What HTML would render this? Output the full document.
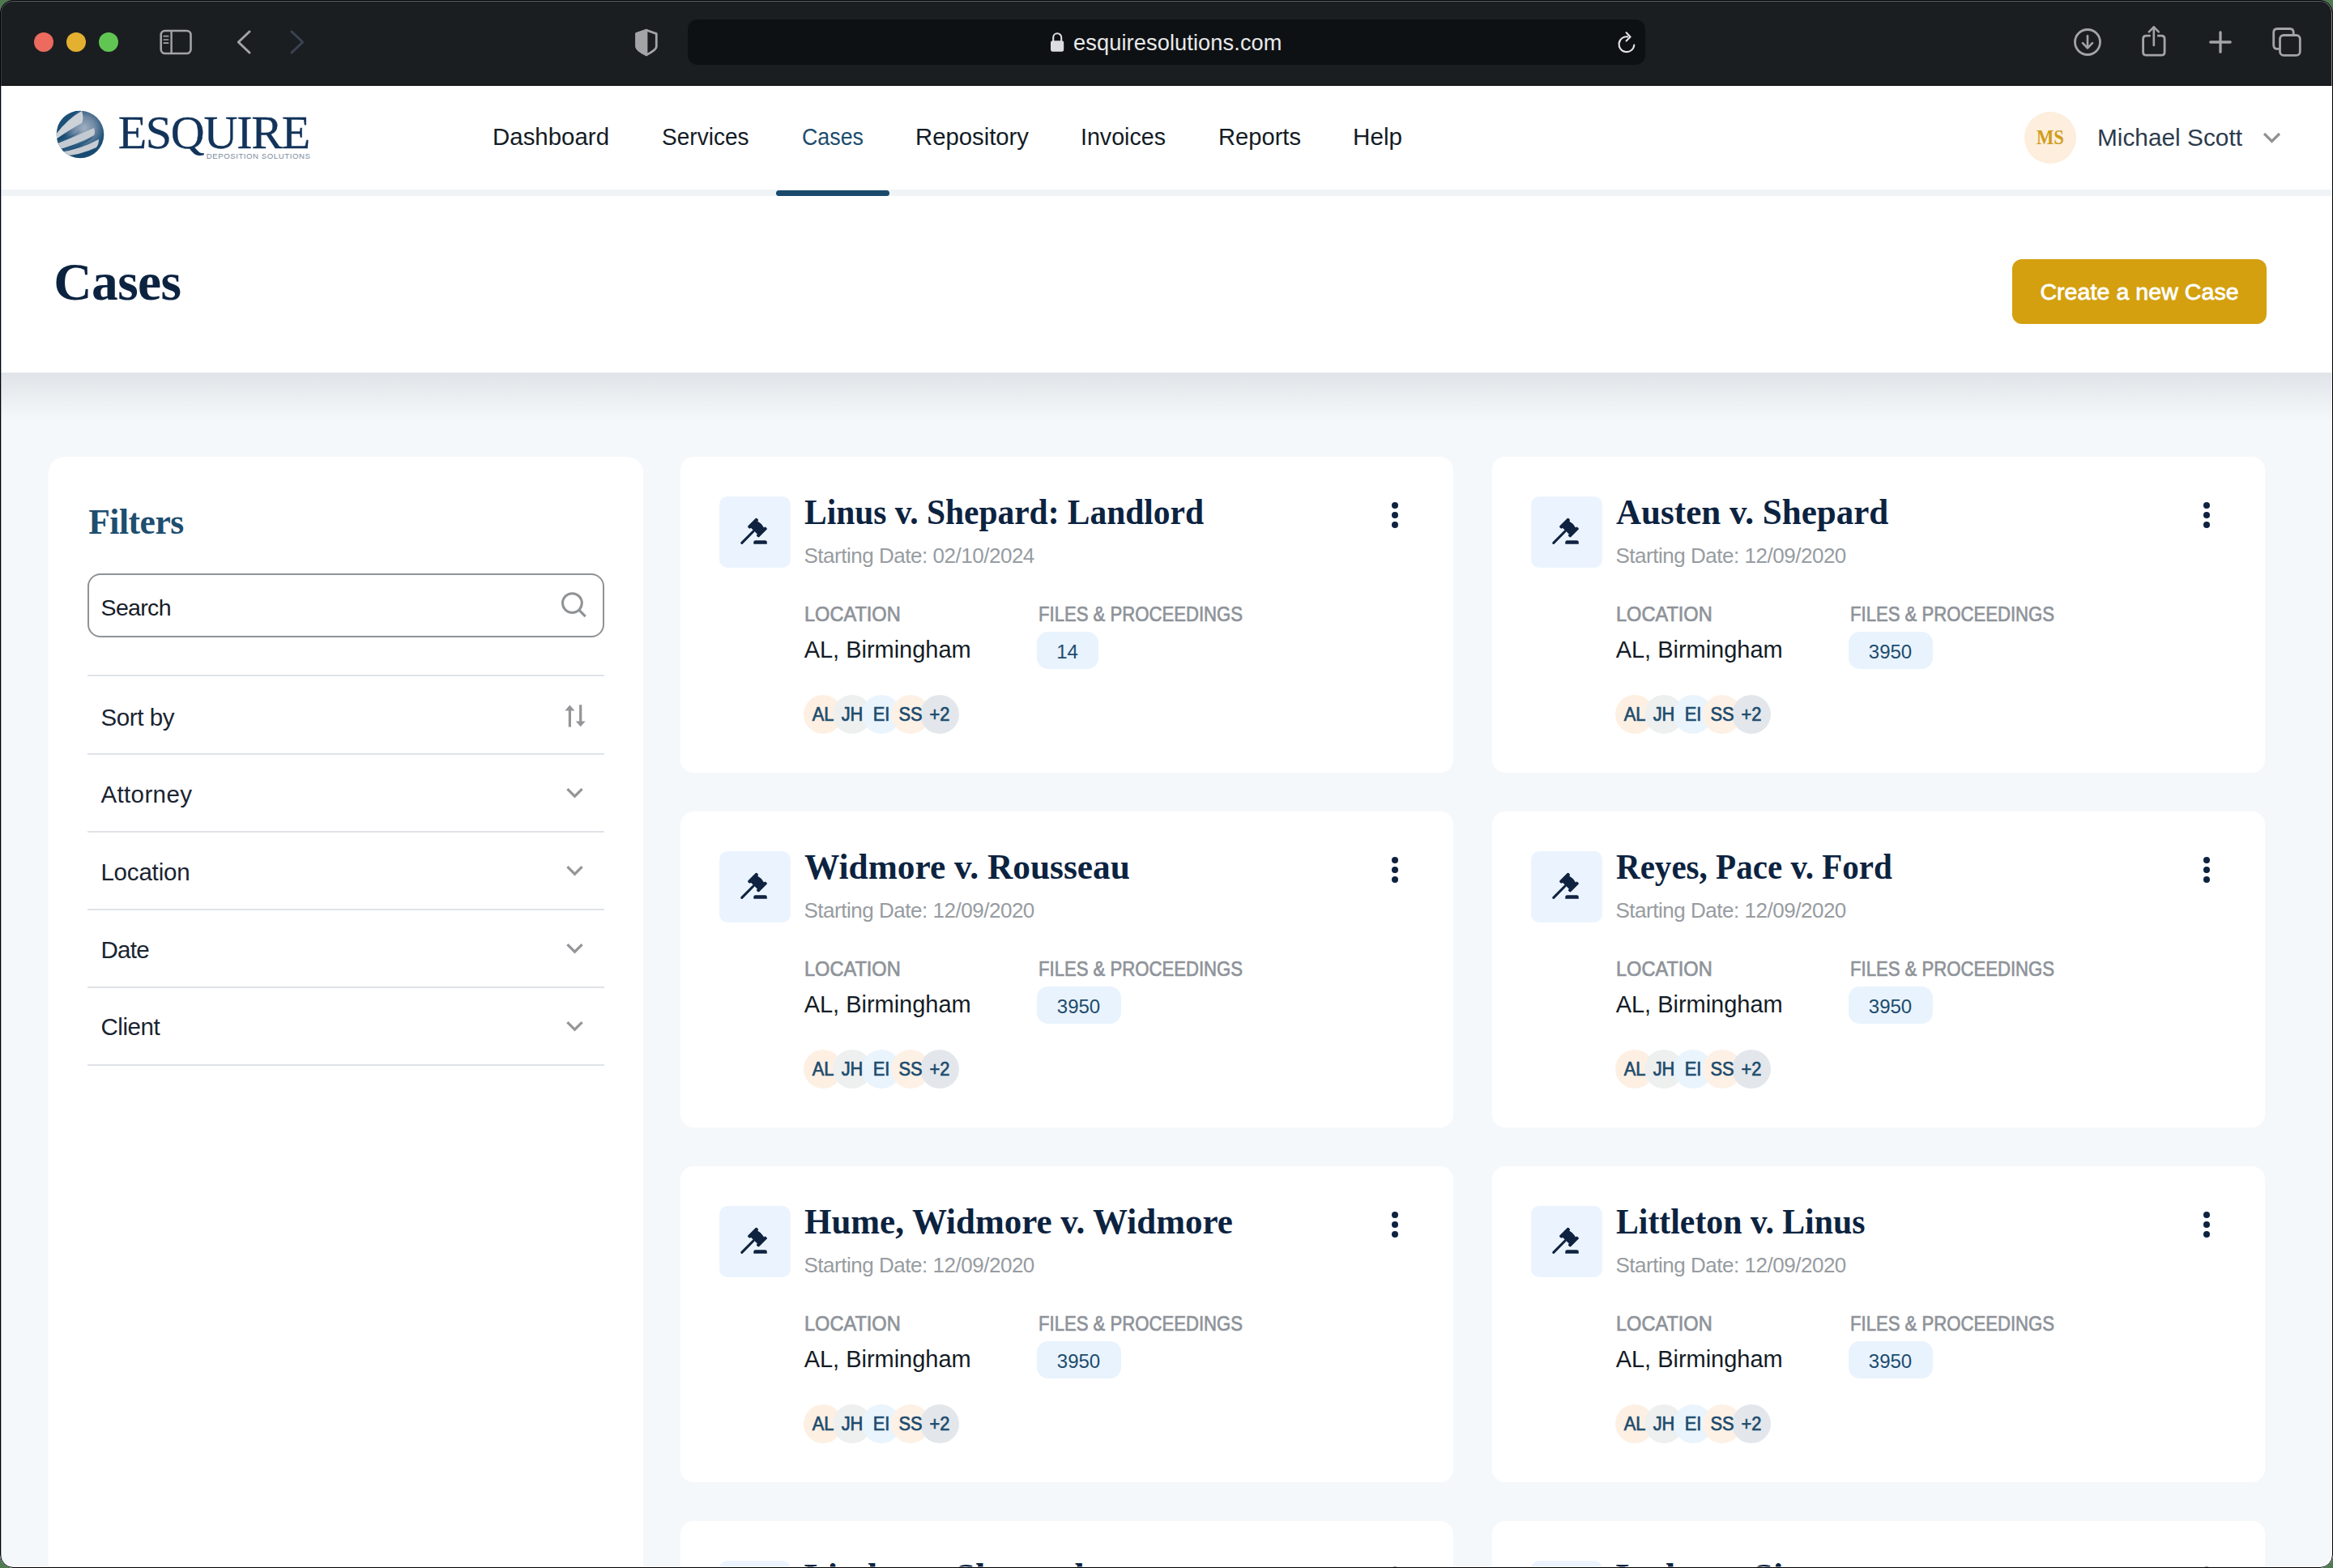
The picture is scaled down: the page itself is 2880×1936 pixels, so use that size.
<!DOCTYPE html>
<html><head><meta charset="utf-8"><title>Esquire - Cases</title><style>
html,body{margin:0;padding:0;}
body{width:2880px;height:1936px;overflow:hidden;background:#4d7a4f;position:relative;font-family:"Liberation Sans", sans-serif;}
.win{position:absolute;left:0;top:0;width:2880px;height:1936px;border-radius:16px;overflow:hidden;background:#f5f8fb;}
.abs{position:absolute;}
.t{position:absolute;white-space:nowrap;line-height:0;}
.card{position:absolute;width:954px;height:390px;background:#fff;border-radius:16px;}
.ibox{position:absolute;left:48px;top:49px;width:88px;height:88px;border-radius:10px;background:#ebf4fe;}
.kebab{position:absolute;width:8px;height:8px;border-radius:50%;background:#0f2240;}
.badge{position:absolute;height:46px;border-radius:14px;background:#e9f3fd;}
.av{position:absolute;width:48px;height:48px;border-radius:50%;}
.fline{position:absolute;left:108px;width:638px;height:2px;background:#dfe3e8;}
</style></head><body>
<div class="win">
<div class="abs" style="left:0;top:0;width:2880px;height:105px;background:#1b1e21;"></div>
<div class="abs" style="left:0;top:105px;width:2880px;height:1px;background:#0a0d10;"></div>
<div class="abs" style="left:42px;top:40px;width:24px;height:24px;border-radius:50%;background:#ec6a5e;"></div>
<div class="abs" style="left:82px;top:40px;width:24px;height:24px;border-radius:50%;background:#e3b02f;"></div>
<div class="abs" style="left:122px;top:40px;width:24px;height:24px;border-radius:50%;background:#61c554;"></div>
<div class="abs" style="left:849px;top:24px;width:1182px;height:56px;border-radius:12px;background:#0e1114;"></div>
<div class="t" style="left:1325.0px;top:53.0px;font-size:27.2px;font-family:'Liberation Sans', sans-serif;font-weight:400;color:#e8e9ea;letter-spacing:0.111px;">esquiresolutions.com</div>
<div class="abs" style="left:0;top:106px;width:2880px;height:128px;background:#fff;"></div>
<div class="abs" style="left:0;top:234px;width:2880px;height:8px;background:#f0f4f7;"></div>
<div class="t" style="left:607.5px;top:168.6px;font-size:29.5px;font-family:'Liberation Sans', sans-serif;font-weight:400;color:#141c26;transform:scaleX(0.9979);transform-origin:0 0;">Dashboard</div>
<div class="t" style="left:816.5px;top:168.6px;font-size:29.5px;font-family:'Liberation Sans', sans-serif;font-weight:400;color:#141c26;transform:scaleX(0.9505);transform-origin:0 0;">Services</div>
<div class="t" style="left:989.5px;top:168.6px;font-size:29.5px;font-family:'Liberation Sans', sans-serif;font-weight:400;color:#1d4c6e;transform:scaleX(0.9091);transform-origin:0 0;">Cases</div>
<div class="t" style="left:1129.5px;top:168.6px;font-size:29.5px;font-family:'Liberation Sans', sans-serif;font-weight:400;color:#141c26;transform:scaleX(0.9929);transform-origin:0 0;">Repository</div>
<div class="t" style="left:1333.5px;top:168.6px;font-size:29.5px;font-family:'Liberation Sans', sans-serif;font-weight:400;color:#141c26;transform:scaleX(0.9704);transform-origin:0 0;">Invoices</div>
<div class="t" style="left:1503.5px;top:168.6px;font-size:29.5px;font-family:'Liberation Sans', sans-serif;font-weight:400;color:#141c26;transform:scaleX(0.9874);transform-origin:0 0;">Reports</div>
<div class="t" style="left:1669.5px;top:168.6px;font-size:29.5px;font-family:'Liberation Sans', sans-serif;font-weight:400;color:#141c26;transform:scaleX(1.0049);transform-origin:0 0;">Help</div>
<div class="abs" style="left:958px;top:235px;width:140px;height:7px;border-radius:4px;background:#1a4a6b;"></div>
<div class="abs" style="left:0;top:242px;width:2880px;height:218px;background:#fff;"></div>
<div class="abs" style="left:0;top:460px;width:2880px;height:60px;background:linear-gradient(#e0e4e8,#f5f8fb);"></div>
<div class="t" style="left:66.3px;top:348.4px;font-size:65.5px;font-family:'Liberation Serif', serif;font-weight:700;color:#0c2340;letter-spacing:-0.6px;">Cases</div>
<div class="abs" style="left:2484px;top:320px;width:314px;height:80px;border-radius:12px;background:#d4a00f;"></div>
<div class="t" style="left:2518.4px;top:359.9px;font-size:28.5px;font-family:'Liberation Sans', sans-serif;font-weight:400;color:#fff;letter-spacing:0.075px;-webkit-text-stroke:0.8px #fff;">Create a new Case</div>
<div class="abs" style="left:60px;top:563.5px;width:734px;height:1500px;border-radius:20px;background:#fff;"></div>
<div class="t" style="left:109.2px;top:644.0px;font-size:43.5px;font-family:'Liberation Serif', serif;font-weight:700;color:#1e4e70;letter-spacing:-0.467px;">Filters</div>
<div class="abs" style="left:108px;top:708px;width:634px;height:75px;border:2px solid #8f9296;border-radius:16px;"></div>
<div class="t" style="left:124.6px;top:749.8px;font-size:28.5px;font-family:'Liberation Sans', sans-serif;font-weight:400;color:#161d28;letter-spacing:-0.68px;">Search</div>
<div class="fline" style="top:833px;"></div>
<div class="fline" style="top:929.5px;"></div>
<div class="fline" style="top:1025.5px;"></div>
<div class="fline" style="top:1121.5px;"></div>
<div class="fline" style="top:1217.5px;"></div>
<div class="fline" style="top:1313.5px;"></div>
<div class="t" style="left:124.4px;top:885.5px;font-size:29.5px;font-family:'Liberation Sans', sans-serif;font-weight:400;color:#1a2431;letter-spacing:-0.383px;">Sort by</div>
<div class="t" style="left:124.4px;top:980.8px;font-size:29.5px;font-family:'Liberation Sans', sans-serif;font-weight:400;color:#1a2431;letter-spacing:0.386px;">Attorney</div>
<div class="t" style="left:124.4px;top:1076.6px;font-size:29.5px;font-family:'Liberation Sans', sans-serif;font-weight:400;color:#1a2431;letter-spacing:-0.186px;">Location</div>
<div class="t" style="left:124.4px;top:1172.8px;font-size:29.5px;font-family:'Liberation Sans', sans-serif;font-weight:400;color:#1a2431;letter-spacing:-0.7px;">Date</div>
<div class="t" style="left:124.4px;top:1268.4px;font-size:29.5px;font-family:'Liberation Sans', sans-serif;font-weight:400;color:#1a2431;letter-spacing:-0.42px;">Client</div>
<div class="card" style="left:840px;top:563.5px;">
<div class="ibox"></div>
<div class="kebab" style="left:878px;top:56px;"></div>
<div class="kebab" style="left:878px;top:68px;"></div>
<div class="kebab" style="left:878px;top:80px;"></div>
<div class="t" style="left:152.5px;top:69.2px;font-size:44px;font-family:'Liberation Serif', serif;font-weight:700;color:#0c2340;transform:scaleX(0.9421);transform-origin:0 0;">Linus v. Shepard: Landlord</div>
<div class="t" style="left:152.5px;top:122.0px;font-size:26px;font-family:'Liberation Sans', sans-serif;font-weight:400;color:#979ca1;letter-spacing:-0.479px;">Starting Date: 02/10/2024</div>
<div class="t" style="left:153.3px;top:194.1px;font-size:25px;font-family:'Liberation Sans', sans-serif;font-weight:400;color:#8e9399;-webkit-text-stroke:0.7px #8e9399;transform:scaleX(0.9420);transform-origin:0 0;">LOCATION</div>
<div class="t" style="left:441.9px;top:194.1px;font-size:25px;font-family:'Liberation Sans', sans-serif;font-weight:400;color:#8e9399;-webkit-text-stroke:0.7px #8e9399;transform:scaleX(0.8848);transform-origin:0 0;">FILES &amp; PROCEEDINGS</div>
<div class="t" style="left:152.7px;top:238.3px;font-size:29px;font-family:'Liberation Sans', sans-serif;font-weight:400;color:#141c26;letter-spacing:-0.023px;">AL, Birmingham</div>
<div class="badge" style="left:439.5px;top:216.5px;width:76px;"></div>
<div class="t" style="left:477.5px;top:241.2px;font-size:24px;font-family:'Liberation Sans', sans-serif;font-weight:400;color:#1d4c6e;transform:translateX(-50%);">14</div>
<div class="av" style="left:152px;top:294.5px;background:#fdf0e3;"></div>
<div class="av" style="left:188px;top:294.5px;background:#eef0f0;"></div>
<div class="av" style="left:224px;top:294.5px;background:#eaf4fd;"></div>
<div class="av" style="left:260px;top:294.5px;background:#fdf1e6;"></div>
<div class="av" style="left:296px;top:294.5px;background:#e3e7ec;"></div>
<div class="t" style="left:176.0px;top:318.6px;font-size:23.5px;font-family:'Liberation Sans', sans-serif;font-weight:400;color:#1d4c6e;transform:translateX(-50%) scaleX(0.93);-webkit-text-stroke:0.7px #1d4c6e;">AL</div>
<div class="t" style="left:212.0px;top:318.6px;font-size:23.5px;font-family:'Liberation Sans', sans-serif;font-weight:400;color:#1d4c6e;transform:translateX(-50%) scaleX(0.93);-webkit-text-stroke:0.7px #1d4c6e;">JH</div>
<div class="t" style="left:248.0px;top:318.6px;font-size:23.5px;font-family:'Liberation Sans', sans-serif;font-weight:400;color:#1d4c6e;transform:translateX(-50%) scaleX(0.93);-webkit-text-stroke:0.7px #1d4c6e;">EI</div>
<div class="t" style="left:284.0px;top:318.6px;font-size:23.5px;font-family:'Liberation Sans', sans-serif;font-weight:400;color:#1d4c6e;transform:translateX(-50%) scaleX(0.93);-webkit-text-stroke:0.7px #1d4c6e;">SS</div>
<div class="t" style="left:320.0px;top:318.6px;font-size:23.5px;font-family:'Liberation Sans', sans-serif;font-weight:400;color:#1d4c6e;transform:translateX(-50%) scaleX(0.93);-webkit-text-stroke:0.7px #1d4c6e;">+2</div>
</div>
<div class="card" style="left:1842px;top:563.5px;">
<div class="ibox"></div>
<div class="kebab" style="left:878px;top:56px;"></div>
<div class="kebab" style="left:878px;top:68px;"></div>
<div class="kebab" style="left:878px;top:80px;"></div>
<div class="t" style="left:152.5px;top:69.2px;font-size:44px;font-family:'Liberation Serif', serif;font-weight:700;color:#0c2340;transform:scaleX(0.9790);transform-origin:0 0;">Austen v. Shepard</div>
<div class="t" style="left:152.5px;top:122.0px;font-size:26px;font-family:'Liberation Sans', sans-serif;font-weight:400;color:#979ca1;letter-spacing:-0.479px;">Starting Date: 12/09/2020</div>
<div class="t" style="left:153.3px;top:194.1px;font-size:25px;font-family:'Liberation Sans', sans-serif;font-weight:400;color:#8e9399;-webkit-text-stroke:0.7px #8e9399;transform:scaleX(0.9420);transform-origin:0 0;">LOCATION</div>
<div class="t" style="left:441.9px;top:194.1px;font-size:25px;font-family:'Liberation Sans', sans-serif;font-weight:400;color:#8e9399;-webkit-text-stroke:0.7px #8e9399;transform:scaleX(0.8848);transform-origin:0 0;">FILES &amp; PROCEEDINGS</div>
<div class="t" style="left:152.7px;top:238.3px;font-size:29px;font-family:'Liberation Sans', sans-serif;font-weight:400;color:#141c26;letter-spacing:-0.023px;">AL, Birmingham</div>
<div class="badge" style="left:439.5px;top:216.5px;width:104px;"></div>
<div class="t" style="left:491.5px;top:241.2px;font-size:24px;font-family:'Liberation Sans', sans-serif;font-weight:400;color:#1d4c6e;transform:translateX(-50%);">3950</div>
<div class="av" style="left:152px;top:294.5px;background:#fdf0e3;"></div>
<div class="av" style="left:188px;top:294.5px;background:#eef0f0;"></div>
<div class="av" style="left:224px;top:294.5px;background:#eaf4fd;"></div>
<div class="av" style="left:260px;top:294.5px;background:#fdf1e6;"></div>
<div class="av" style="left:296px;top:294.5px;background:#e3e7ec;"></div>
<div class="t" style="left:176.0px;top:318.6px;font-size:23.5px;font-family:'Liberation Sans', sans-serif;font-weight:400;color:#1d4c6e;transform:translateX(-50%) scaleX(0.93);-webkit-text-stroke:0.7px #1d4c6e;">AL</div>
<div class="t" style="left:212.0px;top:318.6px;font-size:23.5px;font-family:'Liberation Sans', sans-serif;font-weight:400;color:#1d4c6e;transform:translateX(-50%) scaleX(0.93);-webkit-text-stroke:0.7px #1d4c6e;">JH</div>
<div class="t" style="left:248.0px;top:318.6px;font-size:23.5px;font-family:'Liberation Sans', sans-serif;font-weight:400;color:#1d4c6e;transform:translateX(-50%) scaleX(0.93);-webkit-text-stroke:0.7px #1d4c6e;">EI</div>
<div class="t" style="left:284.0px;top:318.6px;font-size:23.5px;font-family:'Liberation Sans', sans-serif;font-weight:400;color:#1d4c6e;transform:translateX(-50%) scaleX(0.93);-webkit-text-stroke:0.7px #1d4c6e;">SS</div>
<div class="t" style="left:320.0px;top:318.6px;font-size:23.5px;font-family:'Liberation Sans', sans-serif;font-weight:400;color:#1d4c6e;transform:translateX(-50%) scaleX(0.93);-webkit-text-stroke:0.7px #1d4c6e;">+2</div>
</div>
<div class="card" style="left:840px;top:1001.5px;">
<div class="ibox"></div>
<div class="kebab" style="left:878px;top:56px;"></div>
<div class="kebab" style="left:878px;top:68px;"></div>
<div class="kebab" style="left:878px;top:80px;"></div>
<div class="t" style="left:152.5px;top:69.2px;font-size:44px;font-family:'Liberation Serif', serif;font-weight:700;color:#0c2340;transform:scaleX(0.9850);transform-origin:0 0;">Widmore v. Rousseau</div>
<div class="t" style="left:152.5px;top:122.0px;font-size:26px;font-family:'Liberation Sans', sans-serif;font-weight:400;color:#979ca1;letter-spacing:-0.479px;">Starting Date: 12/09/2020</div>
<div class="t" style="left:153.3px;top:194.1px;font-size:25px;font-family:'Liberation Sans', sans-serif;font-weight:400;color:#8e9399;-webkit-text-stroke:0.7px #8e9399;transform:scaleX(0.9420);transform-origin:0 0;">LOCATION</div>
<div class="t" style="left:441.9px;top:194.1px;font-size:25px;font-family:'Liberation Sans', sans-serif;font-weight:400;color:#8e9399;-webkit-text-stroke:0.7px #8e9399;transform:scaleX(0.8848);transform-origin:0 0;">FILES &amp; PROCEEDINGS</div>
<div class="t" style="left:152.7px;top:238.3px;font-size:29px;font-family:'Liberation Sans', sans-serif;font-weight:400;color:#141c26;letter-spacing:-0.023px;">AL, Birmingham</div>
<div class="badge" style="left:439.5px;top:216.5px;width:104px;"></div>
<div class="t" style="left:491.5px;top:241.2px;font-size:24px;font-family:'Liberation Sans', sans-serif;font-weight:400;color:#1d4c6e;transform:translateX(-50%);">3950</div>
<div class="av" style="left:152px;top:294.5px;background:#fdf0e3;"></div>
<div class="av" style="left:188px;top:294.5px;background:#eef0f0;"></div>
<div class="av" style="left:224px;top:294.5px;background:#eaf4fd;"></div>
<div class="av" style="left:260px;top:294.5px;background:#fdf1e6;"></div>
<div class="av" style="left:296px;top:294.5px;background:#e3e7ec;"></div>
<div class="t" style="left:176.0px;top:318.6px;font-size:23.5px;font-family:'Liberation Sans', sans-serif;font-weight:400;color:#1d4c6e;transform:translateX(-50%) scaleX(0.93);-webkit-text-stroke:0.7px #1d4c6e;">AL</div>
<div class="t" style="left:212.0px;top:318.6px;font-size:23.5px;font-family:'Liberation Sans', sans-serif;font-weight:400;color:#1d4c6e;transform:translateX(-50%) scaleX(0.93);-webkit-text-stroke:0.7px #1d4c6e;">JH</div>
<div class="t" style="left:248.0px;top:318.6px;font-size:23.5px;font-family:'Liberation Sans', sans-serif;font-weight:400;color:#1d4c6e;transform:translateX(-50%) scaleX(0.93);-webkit-text-stroke:0.7px #1d4c6e;">EI</div>
<div class="t" style="left:284.0px;top:318.6px;font-size:23.5px;font-family:'Liberation Sans', sans-serif;font-weight:400;color:#1d4c6e;transform:translateX(-50%) scaleX(0.93);-webkit-text-stroke:0.7px #1d4c6e;">SS</div>
<div class="t" style="left:320.0px;top:318.6px;font-size:23.5px;font-family:'Liberation Sans', sans-serif;font-weight:400;color:#1d4c6e;transform:translateX(-50%) scaleX(0.93);-webkit-text-stroke:0.7px #1d4c6e;">+2</div>
</div>
<div class="card" style="left:1842px;top:1001.5px;">
<div class="ibox"></div>
<div class="kebab" style="left:878px;top:56px;"></div>
<div class="kebab" style="left:878px;top:68px;"></div>
<div class="kebab" style="left:878px;top:80px;"></div>
<div class="t" style="left:152.5px;top:69.2px;font-size:44px;font-family:'Liberation Serif', serif;font-weight:700;color:#0c2340;transform:scaleX(0.9329);transform-origin:0 0;">Reyes, Pace v. Ford</div>
<div class="t" style="left:152.5px;top:122.0px;font-size:26px;font-family:'Liberation Sans', sans-serif;font-weight:400;color:#979ca1;letter-spacing:-0.479px;">Starting Date: 12/09/2020</div>
<div class="t" style="left:153.3px;top:194.1px;font-size:25px;font-family:'Liberation Sans', sans-serif;font-weight:400;color:#8e9399;-webkit-text-stroke:0.7px #8e9399;transform:scaleX(0.9420);transform-origin:0 0;">LOCATION</div>
<div class="t" style="left:441.9px;top:194.1px;font-size:25px;font-family:'Liberation Sans', sans-serif;font-weight:400;color:#8e9399;-webkit-text-stroke:0.7px #8e9399;transform:scaleX(0.8848);transform-origin:0 0;">FILES &amp; PROCEEDINGS</div>
<div class="t" style="left:152.7px;top:238.3px;font-size:29px;font-family:'Liberation Sans', sans-serif;font-weight:400;color:#141c26;letter-spacing:-0.023px;">AL, Birmingham</div>
<div class="badge" style="left:439.5px;top:216.5px;width:104px;"></div>
<div class="t" style="left:491.5px;top:241.2px;font-size:24px;font-family:'Liberation Sans', sans-serif;font-weight:400;color:#1d4c6e;transform:translateX(-50%);">3950</div>
<div class="av" style="left:152px;top:294.5px;background:#fdf0e3;"></div>
<div class="av" style="left:188px;top:294.5px;background:#eef0f0;"></div>
<div class="av" style="left:224px;top:294.5px;background:#eaf4fd;"></div>
<div class="av" style="left:260px;top:294.5px;background:#fdf1e6;"></div>
<div class="av" style="left:296px;top:294.5px;background:#e3e7ec;"></div>
<div class="t" style="left:176.0px;top:318.6px;font-size:23.5px;font-family:'Liberation Sans', sans-serif;font-weight:400;color:#1d4c6e;transform:translateX(-50%) scaleX(0.93);-webkit-text-stroke:0.7px #1d4c6e;">AL</div>
<div class="t" style="left:212.0px;top:318.6px;font-size:23.5px;font-family:'Liberation Sans', sans-serif;font-weight:400;color:#1d4c6e;transform:translateX(-50%) scaleX(0.93);-webkit-text-stroke:0.7px #1d4c6e;">JH</div>
<div class="t" style="left:248.0px;top:318.6px;font-size:23.5px;font-family:'Liberation Sans', sans-serif;font-weight:400;color:#1d4c6e;transform:translateX(-50%) scaleX(0.93);-webkit-text-stroke:0.7px #1d4c6e;">EI</div>
<div class="t" style="left:284.0px;top:318.6px;font-size:23.5px;font-family:'Liberation Sans', sans-serif;font-weight:400;color:#1d4c6e;transform:translateX(-50%) scaleX(0.93);-webkit-text-stroke:0.7px #1d4c6e;">SS</div>
<div class="t" style="left:320.0px;top:318.6px;font-size:23.5px;font-family:'Liberation Sans', sans-serif;font-weight:400;color:#1d4c6e;transform:translateX(-50%) scaleX(0.93);-webkit-text-stroke:0.7px #1d4c6e;">+2</div>
</div>
<div class="card" style="left:840px;top:1439.5px;">
<div class="ibox"></div>
<div class="kebab" style="left:878px;top:56px;"></div>
<div class="kebab" style="left:878px;top:68px;"></div>
<div class="kebab" style="left:878px;top:80px;"></div>
<div class="t" style="left:152.5px;top:69.2px;font-size:44px;font-family:'Liberation Serif', serif;font-weight:700;color:#0c2340;transform:scaleX(0.9765);transform-origin:0 0;">Hume, Widmore v. Widmore</div>
<div class="t" style="left:152.5px;top:122.0px;font-size:26px;font-family:'Liberation Sans', sans-serif;font-weight:400;color:#979ca1;letter-spacing:-0.479px;">Starting Date: 12/09/2020</div>
<div class="t" style="left:153.3px;top:194.1px;font-size:25px;font-family:'Liberation Sans', sans-serif;font-weight:400;color:#8e9399;-webkit-text-stroke:0.7px #8e9399;transform:scaleX(0.9420);transform-origin:0 0;">LOCATION</div>
<div class="t" style="left:441.9px;top:194.1px;font-size:25px;font-family:'Liberation Sans', sans-serif;font-weight:400;color:#8e9399;-webkit-text-stroke:0.7px #8e9399;transform:scaleX(0.8848);transform-origin:0 0;">FILES &amp; PROCEEDINGS</div>
<div class="t" style="left:152.7px;top:238.3px;font-size:29px;font-family:'Liberation Sans', sans-serif;font-weight:400;color:#141c26;letter-spacing:-0.023px;">AL, Birmingham</div>
<div class="badge" style="left:439.5px;top:216.5px;width:104px;"></div>
<div class="t" style="left:491.5px;top:241.2px;font-size:24px;font-family:'Liberation Sans', sans-serif;font-weight:400;color:#1d4c6e;transform:translateX(-50%);">3950</div>
<div class="av" style="left:152px;top:294.5px;background:#fdf0e3;"></div>
<div class="av" style="left:188px;top:294.5px;background:#eef0f0;"></div>
<div class="av" style="left:224px;top:294.5px;background:#eaf4fd;"></div>
<div class="av" style="left:260px;top:294.5px;background:#fdf1e6;"></div>
<div class="av" style="left:296px;top:294.5px;background:#e3e7ec;"></div>
<div class="t" style="left:176.0px;top:318.6px;font-size:23.5px;font-family:'Liberation Sans', sans-serif;font-weight:400;color:#1d4c6e;transform:translateX(-50%) scaleX(0.93);-webkit-text-stroke:0.7px #1d4c6e;">AL</div>
<div class="t" style="left:212.0px;top:318.6px;font-size:23.5px;font-family:'Liberation Sans', sans-serif;font-weight:400;color:#1d4c6e;transform:translateX(-50%) scaleX(0.93);-webkit-text-stroke:0.7px #1d4c6e;">JH</div>
<div class="t" style="left:248.0px;top:318.6px;font-size:23.5px;font-family:'Liberation Sans', sans-serif;font-weight:400;color:#1d4c6e;transform:translateX(-50%) scaleX(0.93);-webkit-text-stroke:0.7px #1d4c6e;">EI</div>
<div class="t" style="left:284.0px;top:318.6px;font-size:23.5px;font-family:'Liberation Sans', sans-serif;font-weight:400;color:#1d4c6e;transform:translateX(-50%) scaleX(0.93);-webkit-text-stroke:0.7px #1d4c6e;">SS</div>
<div class="t" style="left:320.0px;top:318.6px;font-size:23.5px;font-family:'Liberation Sans', sans-serif;font-weight:400;color:#1d4c6e;transform:translateX(-50%) scaleX(0.93);-webkit-text-stroke:0.7px #1d4c6e;">+2</div>
</div>
<div class="card" style="left:1842px;top:1439.5px;">
<div class="ibox"></div>
<div class="kebab" style="left:878px;top:56px;"></div>
<div class="kebab" style="left:878px;top:68px;"></div>
<div class="kebab" style="left:878px;top:80px;"></div>
<div class="t" style="left:152.5px;top:69.2px;font-size:44px;font-family:'Liberation Serif', serif;font-weight:700;color:#0c2340;transform:scaleX(0.9488);transform-origin:0 0;">Littleton v. Linus</div>
<div class="t" style="left:152.5px;top:122.0px;font-size:26px;font-family:'Liberation Sans', sans-serif;font-weight:400;color:#979ca1;letter-spacing:-0.479px;">Starting Date: 12/09/2020</div>
<div class="t" style="left:153.3px;top:194.1px;font-size:25px;font-family:'Liberation Sans', sans-serif;font-weight:400;color:#8e9399;-webkit-text-stroke:0.7px #8e9399;transform:scaleX(0.9420);transform-origin:0 0;">LOCATION</div>
<div class="t" style="left:441.9px;top:194.1px;font-size:25px;font-family:'Liberation Sans', sans-serif;font-weight:400;color:#8e9399;-webkit-text-stroke:0.7px #8e9399;transform:scaleX(0.8848);transform-origin:0 0;">FILES &amp; PROCEEDINGS</div>
<div class="t" style="left:152.7px;top:238.3px;font-size:29px;font-family:'Liberation Sans', sans-serif;font-weight:400;color:#141c26;letter-spacing:-0.023px;">AL, Birmingham</div>
<div class="badge" style="left:439.5px;top:216.5px;width:104px;"></div>
<div class="t" style="left:491.5px;top:241.2px;font-size:24px;font-family:'Liberation Sans', sans-serif;font-weight:400;color:#1d4c6e;transform:translateX(-50%);">3950</div>
<div class="av" style="left:152px;top:294.5px;background:#fdf0e3;"></div>
<div class="av" style="left:188px;top:294.5px;background:#eef0f0;"></div>
<div class="av" style="left:224px;top:294.5px;background:#eaf4fd;"></div>
<div class="av" style="left:260px;top:294.5px;background:#fdf1e6;"></div>
<div class="av" style="left:296px;top:294.5px;background:#e3e7ec;"></div>
<div class="t" style="left:176.0px;top:318.6px;font-size:23.5px;font-family:'Liberation Sans', sans-serif;font-weight:400;color:#1d4c6e;transform:translateX(-50%) scaleX(0.93);-webkit-text-stroke:0.7px #1d4c6e;">AL</div>
<div class="t" style="left:212.0px;top:318.6px;font-size:23.5px;font-family:'Liberation Sans', sans-serif;font-weight:400;color:#1d4c6e;transform:translateX(-50%) scaleX(0.93);-webkit-text-stroke:0.7px #1d4c6e;">JH</div>
<div class="t" style="left:248.0px;top:318.6px;font-size:23.5px;font-family:'Liberation Sans', sans-serif;font-weight:400;color:#1d4c6e;transform:translateX(-50%) scaleX(0.93);-webkit-text-stroke:0.7px #1d4c6e;">EI</div>
<div class="t" style="left:284.0px;top:318.6px;font-size:23.5px;font-family:'Liberation Sans', sans-serif;font-weight:400;color:#1d4c6e;transform:translateX(-50%) scaleX(0.93);-webkit-text-stroke:0.7px #1d4c6e;">SS</div>
<div class="t" style="left:320.0px;top:318.6px;font-size:23.5px;font-family:'Liberation Sans', sans-serif;font-weight:400;color:#1d4c6e;transform:translateX(-50%) scaleX(0.93);-webkit-text-stroke:0.7px #1d4c6e;">+2</div>
</div>
<div class="card" style="left:840px;top:1877.5px;">
<div class="ibox"></div>
<div class="kebab" style="left:878px;top:56px;"></div>
<div class="kebab" style="left:878px;top:68px;"></div>
<div class="kebab" style="left:878px;top:80px;"></div>
<div class="t" style="left:152.5px;top:69.2px;font-size:44px;font-family:'Liberation Serif', serif;font-weight:700;color:#0c2340;">Linden v. Shepard</div>
<div class="t" style="left:152.5px;top:122.0px;font-size:26px;font-family:'Liberation Sans', sans-serif;font-weight:400;color:#979ca1;letter-spacing:-0.479px;">Starting Date: 12/09/2020</div>
<div class="t" style="left:153.3px;top:194.1px;font-size:25px;font-family:'Liberation Sans', sans-serif;font-weight:400;color:#8e9399;-webkit-text-stroke:0.7px #8e9399;transform:scaleX(0.9420);transform-origin:0 0;">LOCATION</div>
<div class="t" style="left:441.9px;top:194.1px;font-size:25px;font-family:'Liberation Sans', sans-serif;font-weight:400;color:#8e9399;-webkit-text-stroke:0.7px #8e9399;transform:scaleX(0.8848);transform-origin:0 0;">FILES &amp; PROCEEDINGS</div>
<div class="t" style="left:152.7px;top:238.3px;font-size:29px;font-family:'Liberation Sans', sans-serif;font-weight:400;color:#141c26;letter-spacing:-0.023px;">AL, Birmingham</div>
<div class="badge" style="left:439.5px;top:216.5px;width:104px;"></div>
<div class="t" style="left:491.5px;top:241.2px;font-size:24px;font-family:'Liberation Sans', sans-serif;font-weight:400;color:#1d4c6e;transform:translateX(-50%);">3950</div>
<div class="av" style="left:152px;top:294.5px;background:#fdf0e3;"></div>
<div class="av" style="left:188px;top:294.5px;background:#eef0f0;"></div>
<div class="av" style="left:224px;top:294.5px;background:#eaf4fd;"></div>
<div class="av" style="left:260px;top:294.5px;background:#fdf1e6;"></div>
<div class="av" style="left:296px;top:294.5px;background:#e3e7ec;"></div>
<div class="t" style="left:176.0px;top:318.6px;font-size:23.5px;font-family:'Liberation Sans', sans-serif;font-weight:400;color:#1d4c6e;transform:translateX(-50%) scaleX(0.93);-webkit-text-stroke:0.7px #1d4c6e;">AL</div>
<div class="t" style="left:212.0px;top:318.6px;font-size:23.5px;font-family:'Liberation Sans', sans-serif;font-weight:400;color:#1d4c6e;transform:translateX(-50%) scaleX(0.93);-webkit-text-stroke:0.7px #1d4c6e;">JH</div>
<div class="t" style="left:248.0px;top:318.6px;font-size:23.5px;font-family:'Liberation Sans', sans-serif;font-weight:400;color:#1d4c6e;transform:translateX(-50%) scaleX(0.93);-webkit-text-stroke:0.7px #1d4c6e;">EI</div>
<div class="t" style="left:284.0px;top:318.6px;font-size:23.5px;font-family:'Liberation Sans', sans-serif;font-weight:400;color:#1d4c6e;transform:translateX(-50%) scaleX(0.93);-webkit-text-stroke:0.7px #1d4c6e;">SS</div>
<div class="t" style="left:320.0px;top:318.6px;font-size:23.5px;font-family:'Liberation Sans', sans-serif;font-weight:400;color:#1d4c6e;transform:translateX(-50%) scaleX(0.93);-webkit-text-stroke:0.7px #1d4c6e;">+2</div>
</div>
<div class="card" style="left:1842px;top:1877.5px;">
<div class="ibox"></div>
<div class="kebab" style="left:878px;top:56px;"></div>
<div class="kebab" style="left:878px;top:68px;"></div>
<div class="kebab" style="left:878px;top:80px;"></div>
<div class="t" style="left:152.5px;top:69.2px;font-size:44px;font-family:'Liberation Serif', serif;font-weight:700;color:#0c2340;">Lyden v. Simms</div>
<div class="t" style="left:152.5px;top:122.0px;font-size:26px;font-family:'Liberation Sans', sans-serif;font-weight:400;color:#979ca1;letter-spacing:-0.479px;">Starting Date: 12/09/2020</div>
<div class="t" style="left:153.3px;top:194.1px;font-size:25px;font-family:'Liberation Sans', sans-serif;font-weight:400;color:#8e9399;-webkit-text-stroke:0.7px #8e9399;transform:scaleX(0.9420);transform-origin:0 0;">LOCATION</div>
<div class="t" style="left:441.9px;top:194.1px;font-size:25px;font-family:'Liberation Sans', sans-serif;font-weight:400;color:#8e9399;-webkit-text-stroke:0.7px #8e9399;transform:scaleX(0.8848);transform-origin:0 0;">FILES &amp; PROCEEDINGS</div>
<div class="t" style="left:152.7px;top:238.3px;font-size:29px;font-family:'Liberation Sans', sans-serif;font-weight:400;color:#141c26;letter-spacing:-0.023px;">AL, Birmingham</div>
<div class="badge" style="left:439.5px;top:216.5px;width:104px;"></div>
<div class="t" style="left:491.5px;top:241.2px;font-size:24px;font-family:'Liberation Sans', sans-serif;font-weight:400;color:#1d4c6e;transform:translateX(-50%);">3950</div>
<div class="av" style="left:152px;top:294.5px;background:#fdf0e3;"></div>
<div class="av" style="left:188px;top:294.5px;background:#eef0f0;"></div>
<div class="av" style="left:224px;top:294.5px;background:#eaf4fd;"></div>
<div class="av" style="left:260px;top:294.5px;background:#fdf1e6;"></div>
<div class="av" style="left:296px;top:294.5px;background:#e3e7ec;"></div>
<div class="t" style="left:176.0px;top:318.6px;font-size:23.5px;font-family:'Liberation Sans', sans-serif;font-weight:400;color:#1d4c6e;transform:translateX(-50%) scaleX(0.93);-webkit-text-stroke:0.7px #1d4c6e;">AL</div>
<div class="t" style="left:212.0px;top:318.6px;font-size:23.5px;font-family:'Liberation Sans', sans-serif;font-weight:400;color:#1d4c6e;transform:translateX(-50%) scaleX(0.93);-webkit-text-stroke:0.7px #1d4c6e;">JH</div>
<div class="t" style="left:248.0px;top:318.6px;font-size:23.5px;font-family:'Liberation Sans', sans-serif;font-weight:400;color:#1d4c6e;transform:translateX(-50%) scaleX(0.93);-webkit-text-stroke:0.7px #1d4c6e;">EI</div>
<div class="t" style="left:284.0px;top:318.6px;font-size:23.5px;font-family:'Liberation Sans', sans-serif;font-weight:400;color:#1d4c6e;transform:translateX(-50%) scaleX(0.93);-webkit-text-stroke:0.7px #1d4c6e;">SS</div>
<div class="t" style="left:320.0px;top:318.6px;font-size:23.5px;font-family:'Liberation Sans', sans-serif;font-weight:400;color:#1d4c6e;transform:translateX(-50%) scaleX(0.93);-webkit-text-stroke:0.7px #1d4c6e;">+2</div>
</div>
<svg class="abs" style="left:0;top:0;" width="2880" height="1936" viewBox="0 0 2880 1936"><defs><g id="gavel"><g transform="translate(37 26.6) rotate(45) scale(1.07)" fill="#0f2240"><path d="M-9.1 -6.1 Q-9.1 -7.3 -7.9 -7.3 L-6.4 -7.3 Q-5.2 -7.3 -5.2 -6.1 L-5.2 -5.4 Q0 -7 5.2 -5.4 L5.2 -6.1 Q5.2 -7.3 6.4 -7.3 L7.9 -7.3 Q9.1 -7.3 9.1 -6.1 L9.1 6.1 Q9.1 7.3 7.9 7.3 L6.4 7.3 Q5.2 7.3 5.2 6.1 L5.2 5.4 L-5.2 5.4 L-5.2 6.1 Q-5.2 7.3 -6.4 7.3 L-7.9 7.3 Q-9.1 7.3 -9.1 6.1 Z"/></g><line x1="17.8" y1="45.3" x2="32" y2="31" stroke="#0f2240" stroke-width="3.1" stroke-linecap="round"/><path d="M32.3 46.8 L32.3 44.6 Q32.3 42.3 34.6 42.3 L46.5 42.3 Q48.8 42.3 48.8 44.6 L48.8 46.8 Z" fill="#0f2240"/></g></defs><rect x="198.7" y="38" width="36.8" height="28" rx="5" fill="none" stroke="#a3a4a6" stroke-width="2.6"/><line x1="211.6" y1="38" x2="211.6" y2="66" stroke="#a3a4a6" stroke-width="2.4"/><line x1="202.3" y1="44.7" x2="207.6" y2="44.7" stroke="#a3a4a6" stroke-width="1.7" stroke-linecap="round"/><line x1="202.3" y1="49" x2="207.6" y2="49" stroke="#a3a4a6" stroke-width="1.7" stroke-linecap="round"/><line x1="202.3" y1="53.2" x2="207.6" y2="53.2" stroke="#a3a4a6" stroke-width="1.7" stroke-linecap="round"/><polyline points="308,39 294.3,52 308,65" fill="none" stroke="#a3a4a6" stroke-width="3" stroke-linecap="round" stroke-linejoin="round"/><polyline points="360,39 373.7,52 360,65" fill="none" stroke="#3a4351" stroke-width="3" stroke-linecap="round" stroke-linejoin="round"/><path d="M798 37.2 L810.3 41.6 L810.3 57.6 Q810.3 61.8 798 67.8 Q785.7 61.8 785.7 57.6 L785.7 41.6 Z" fill="none" stroke="#a3a4a6" stroke-width="2.8" stroke-linejoin="round"/><path d="M798 37.2 L785.7 41.6 L785.7 57.6 Q785.7 61.8 798 67.8 Z" fill="#a3a4a6" stroke="#a3a4a6" stroke-width="2.8" stroke-linejoin="round"/><path d="M1300.2 51 L1300.2 46.2 A5 5 0 0 1 1310.2 46.2 L1310.2 51" fill="none" stroke="#dcdde0" stroke-width="2.1"/><rect x="1297" y="50.2" width="16.2" height="13.5" rx="2.6" fill="#dcdde0"/><path d="M2017.3 55.5 A9.4 9.4 0 1 1 2009.2 45.4" fill="none" stroke="#e4e5e7" stroke-width="2.1" stroke-linecap="round"/><polyline points="2007.6,40.3 2012.6,45.5 2007.6,50.5" fill="none" stroke="#e4e5e7" stroke-width="2.1" stroke-linecap="round" stroke-linejoin="round"/><circle cx="2577" cy="52" r="15.5" fill="none" stroke="#a3a4a6" stroke-width="2.8"/><line x1="2577" y1="44.2" x2="2577" y2="59" stroke="#a3a4a6" stroke-width="2.6" stroke-linecap="round"/><polyline points="2571,53.2 2577,59.3 2583,53.2" fill="none" stroke="#a3a4a6" stroke-width="2.6" stroke-linecap="round" stroke-linejoin="round"/><path d="M2653.6 44.2 L2649.6 44.2 Q2645.6 44.2 2645.6 48.2 L2645.6 64.2 Q2645.6 68.2 2649.6 68.2 L2668.1 68.2 Q2672.1 68.2 2672.1 64.2 L2672.1 48.2 Q2672.1 44.2 2668.1 44.2 L2664.3 44.2" fill="none" stroke="#a3a4a6" stroke-width="2.8" stroke-linecap="round"/><line x1="2658.8" y1="33.5" x2="2658.8" y2="56" stroke="#a3a4a6" stroke-width="2.6" stroke-linecap="round"/><polyline points="2652.8,39.3 2658.8,33.3 2664.8,39.3" fill="none" stroke="#a3a4a6" stroke-width="2.6" stroke-linecap="round" stroke-linejoin="round"/><line x1="2728.8" y1="52" x2="2753.2" y2="52" stroke="#a3a4a6" stroke-width="3.3" stroke-linecap="round"/><line x1="2741" y1="39.8" x2="2741" y2="64.2" stroke="#a3a4a6" stroke-width="3.3" stroke-linecap="round"/><path d="M2814.4 60.4 L2811.3 60.4 Q2806.7 60.4 2806.7 55.8 L2806.7 40.1 Q2806.7 35.5 2811.3 35.5 L2826.6 35.5 Q2831.2 35.5 2831.2 40.1 L2831.2 43.5" fill="none" stroke="#a3a4a6" stroke-width="2.8"/><rect x="2814.5" y="43.5" width="24.8" height="24.8" rx="4.6" fill="none" stroke="#a3a4a6" stroke-width="2.8"/><clipPath id="gclip"><circle cx="99" cy="166" r="29.3"/></clipPath><radialGradient id="gglow" cx="104" cy="158" r="30" gradientUnits="userSpaceOnUse"><stop offset="0" stop-color="#9fb0c2"/><stop offset="0.45" stop-color="#6f88a3"/><stop offset="0.85" stop-color="#1f5279"/><stop offset="1" stop-color="#184b71"/></radialGradient><circle cx="99" cy="166" r="29.3" fill="url(#gglow)"/><g clip-path="url(#gclip)"><path d="M66 150 Q80 138 100 135 Q86 146 72 160 Z" fill="#1c5078"/><path d="M68 167 Q82 148 101 137 Q104 146 101 152 Q86 160 69 172 Z" fill="#cdd2d8"/><path d="M69 174 Q86 171 100 161 Q92 168 70 178 Z" fill="#27587e"/><path d="M69 178 Q94 168 116 158 Q118 163 116 167 Q94 179 71 185 Z" fill="#c4cad1"/><path d="M71 186 Q96 180 116 168 Q108 178 74 189 Z" fill="#2a5a80"/><path d="M74 188 Q100 184 122 172 Q122 178 119 182 Q98 192 79 192 Z" fill="#c7ccd2"/></g><circle cx="706.4" cy="744.6" r="11.9" fill="none" stroke="#909396" stroke-width="3"/><line x1="715" y1="753.4" x2="722.7" y2="761.2" stroke="#909396" stroke-width="3.2"/><rect x="701.8" y="876" width="3.2" height="21.6" fill="#939598"/><polygon points="703.4,870.6 709.4,877.4 697.4,877.4" fill="#939598"/><rect x="715.1" y="870.2" width="3.2" height="21" fill="#939598"/><polygon points="716.7,897.2 722.7,890.4 710.7,890.4" fill="#939598"/><polyline points="700.4,974.2 709.5,983.2 718.6,974.2" fill="none" stroke="#939598" stroke-width="3.2"/><polyline points="700.4,1070.2 709.5,1079.2 718.6,1070.2" fill="none" stroke="#939598" stroke-width="3.2"/><polyline points="700.4,1166.2 709.5,1175.2 718.6,1166.2" fill="none" stroke="#939598" stroke-width="3.2"/><polyline points="700.4,1262.2 709.5,1271.2 718.6,1262.2" fill="none" stroke="#939598" stroke-width="3.2"/><polyline points="2795,165 2804.5,174.5 2814,165" fill="none" stroke="#8f9295" stroke-width="3.2"/><use href="#gavel" transform="translate(898 625.0)"/><use href="#gavel" transform="translate(1900 625.0)"/><use href="#gavel" transform="translate(898 1063.0)"/><use href="#gavel" transform="translate(1900 1063.0)"/><use href="#gavel" transform="translate(898 1501.0)"/><use href="#gavel" transform="translate(1900 1501.0)"/><use href="#gavel" transform="translate(898 1939.0)"/><use href="#gavel" transform="translate(1900 1939.0)"/></svg>
<div class="t" style="left:145.7px;top:163.7px;font-size:58px;font-family:'Liberation Serif', serif;font-weight:400;color:#12335a;letter-spacing:-1.25px;-webkit-text-stroke:0.3px #12335a;">ESQUIRE</div>
<div class="t" style="left:254.7px;top:192.6px;font-size:9.6px;font-family:'Liberation Sans', sans-serif;font-weight:400;color:#7b8a9c;letter-spacing:0.574px;">DEPOSITION SOLUTIONS</div>
<div class="abs" style="left:2499px;top:138px;width:64px;height:64px;border-radius:50%;background:#fdeedd;"></div>
<div class="t" style="left:2514.0px;top:169.5px;font-size:24.5px;font-family:'Liberation Serif', serif;font-weight:700;color:#d19d1a;transform:scaleX(0.9239);transform-origin:0 0;">MS</div>
<div class="t" style="left:2589.0px;top:169.5px;font-size:29.8px;font-family:'Liberation Sans', sans-serif;font-weight:400;color:#2c3b4d;letter-spacing:0.008px;">Michael Scott</div>
<div class="abs" style="left:0;top:0;width:2878px;height:1934px;border:1px solid #000;border-radius:16px;box-shadow:inset 0 1px 0 0 rgba(150,155,160,0.55), inset 1px 0 0 0 rgba(80,100,130,0.45), inset -1px 0 0 0 rgba(255,255,255,0.5), inset 0 -1px 0 0 rgba(255,255,255,0.5);pointer-events:none;"></div>
</div>
</body></html>
